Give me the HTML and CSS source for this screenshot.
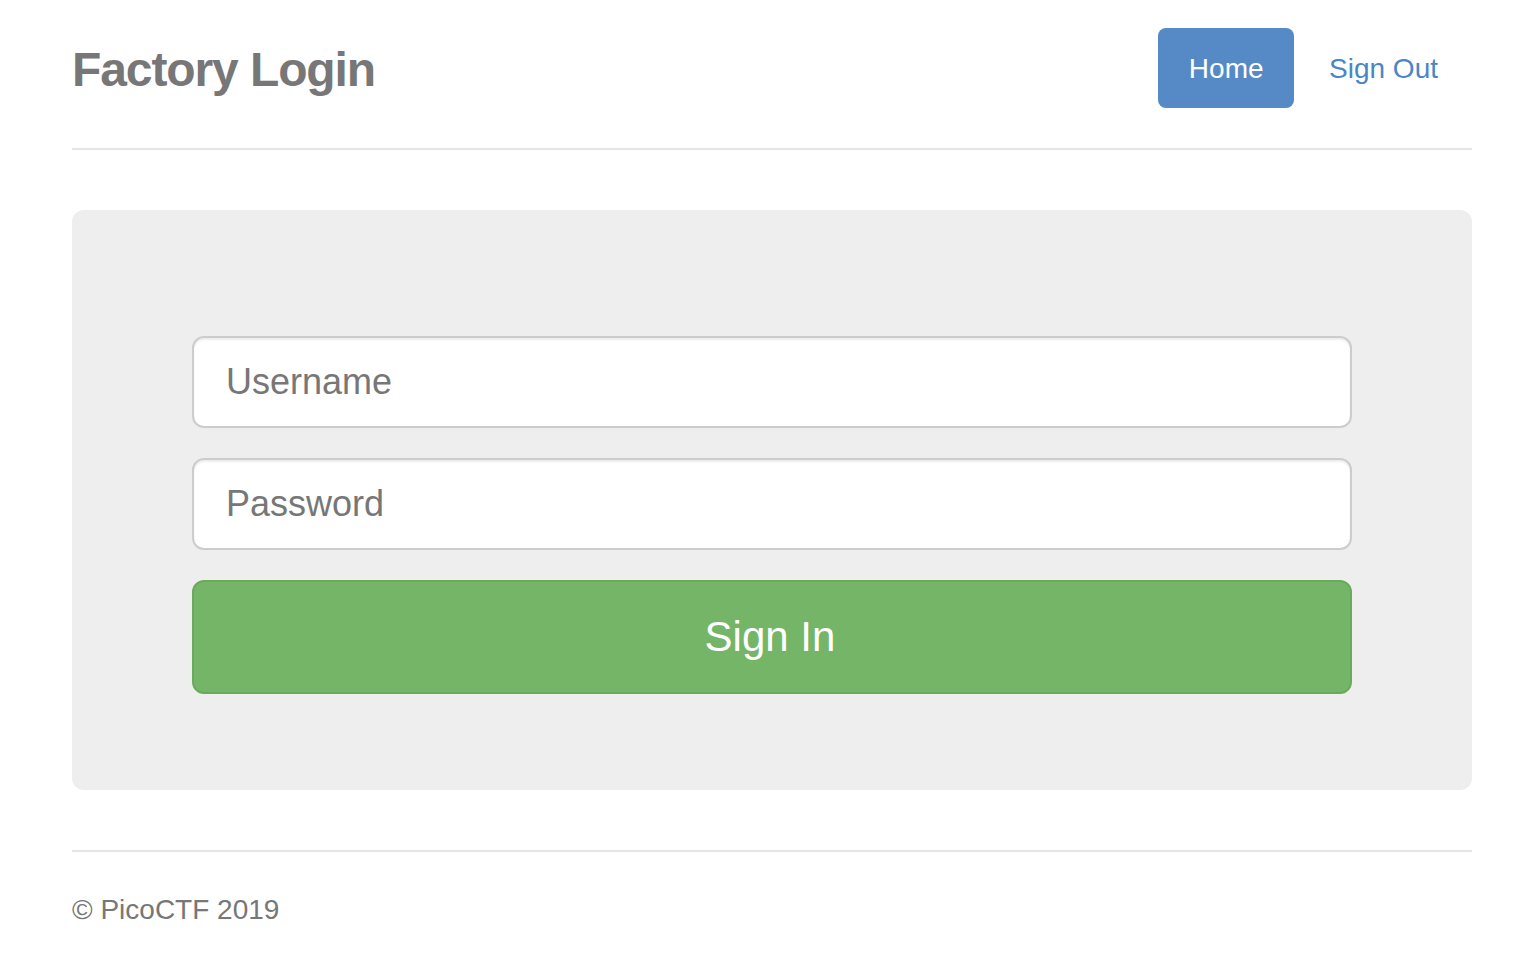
FILE: index.html
```html
<!DOCTYPE html>
<html lang="en">
<head>
<meta charset="utf-8">
<title>Factory Login</title>
<link rel="stylesheet" href="styles.css">
</head>
<body>
<div class="container">
  <header class="header">
    <h3 class="brand">Factory Login</h3>
    <nav class="nav">
      <a class="pill active" href="#">Home</a>
      <a class="pill" href="#">Sign Out</a>
    </nav>
  </header>
  <div class="jumbotron">
    <form class="form">
      <input class="field" type="text" placeholder="Username">
      <input class="field" type="password" placeholder="Password">
      <button class="signin" type="button">Sign In</button>
    </form>
  </div>
  <footer class="footer">
    <p class="copy">© PicoCTF 2019</p>
  </footer>
</div>
</body>
</html>
```

FILE: styles.css
```css
html, body {
  margin: 0;
  padding: 0;
  background: #fff;
}
body {
  font-family: "Liberation Sans", Arial, Helvetica, sans-serif;
  color: #333;
}
.container {
  width: 1400px;
  margin-left: 72px;
}
.header {
  display: flex;
  justify-content: space-between;
  align-items: center;
  padding-top: 28px;
  padding-bottom: 40px;
  border-bottom: 2px solid #e5e5e5;
}
.brand {
  margin: 0;
  padding-top: 3px;
  font-size: 48px;
  line-height: 77px;
  font-weight: bold;
  color: #777;
  letter-spacing: -1.1px;
}
.nav {
  display: flex;
  gap: 5px;
  padding-right: 4px;
}
.pill {
  display: block;
  height: 80px;
  box-sizing: border-box;
  padding: 2px 30px 0 30px;
  line-height: 78px;
  font-size: 28px;
  color: #4a86c5;
  text-decoration: none;
  border-radius: 8px;
}
.pill.active {
  background: #558ac6;
  color: #fff;
  padding-left: 30.5px;
  padding-right: 30.5px;
  padding-top: 1px;
  line-height: 79px;
}
.jumbotron {
  margin-top: 60px;
  height: 580px;
  box-sizing: border-box;
  background: #eee;
  border-radius: 12px;
  padding: 126px 120px 0 120px;
}
.form {
  display: flex;
  flex-direction: column;
}
.field {
  height: 92px;
  box-sizing: border-box;
  border: 2px solid #ccc;
  border-radius: 12px;
  padding: 0 32px;
  margin: 0 0 30px 0;
  font-family: "Liberation Sans", Arial, Helvetica, sans-serif;
  font-size: 36px;
  color: #555;
  background: #fff;
  box-shadow: inset 0 2px 2px rgba(0, 0, 0, 0.075);
  outline: none;
}
.field::placeholder {
  color: #777;
  opacity: 1;
}
.signin {
  height: 114px;
  box-sizing: border-box;
  border: 2px solid #69ab5b;
  border-radius: 12px;
  background: #75b567;
  color: #fff;
  font-family: "Liberation Sans", Arial, Helvetica, sans-serif;
  font-size: 42px;
  padding: 0 4px 0 0;
  cursor: pointer;
}
.footer {
  margin-top: 60px;
  border-top: 2px solid #e5e5e5;
  padding-top: 38px;
}
.copy {
  margin: 0;
  font-size: 28px;
  line-height: 40px;
  color: #777;
}
```
